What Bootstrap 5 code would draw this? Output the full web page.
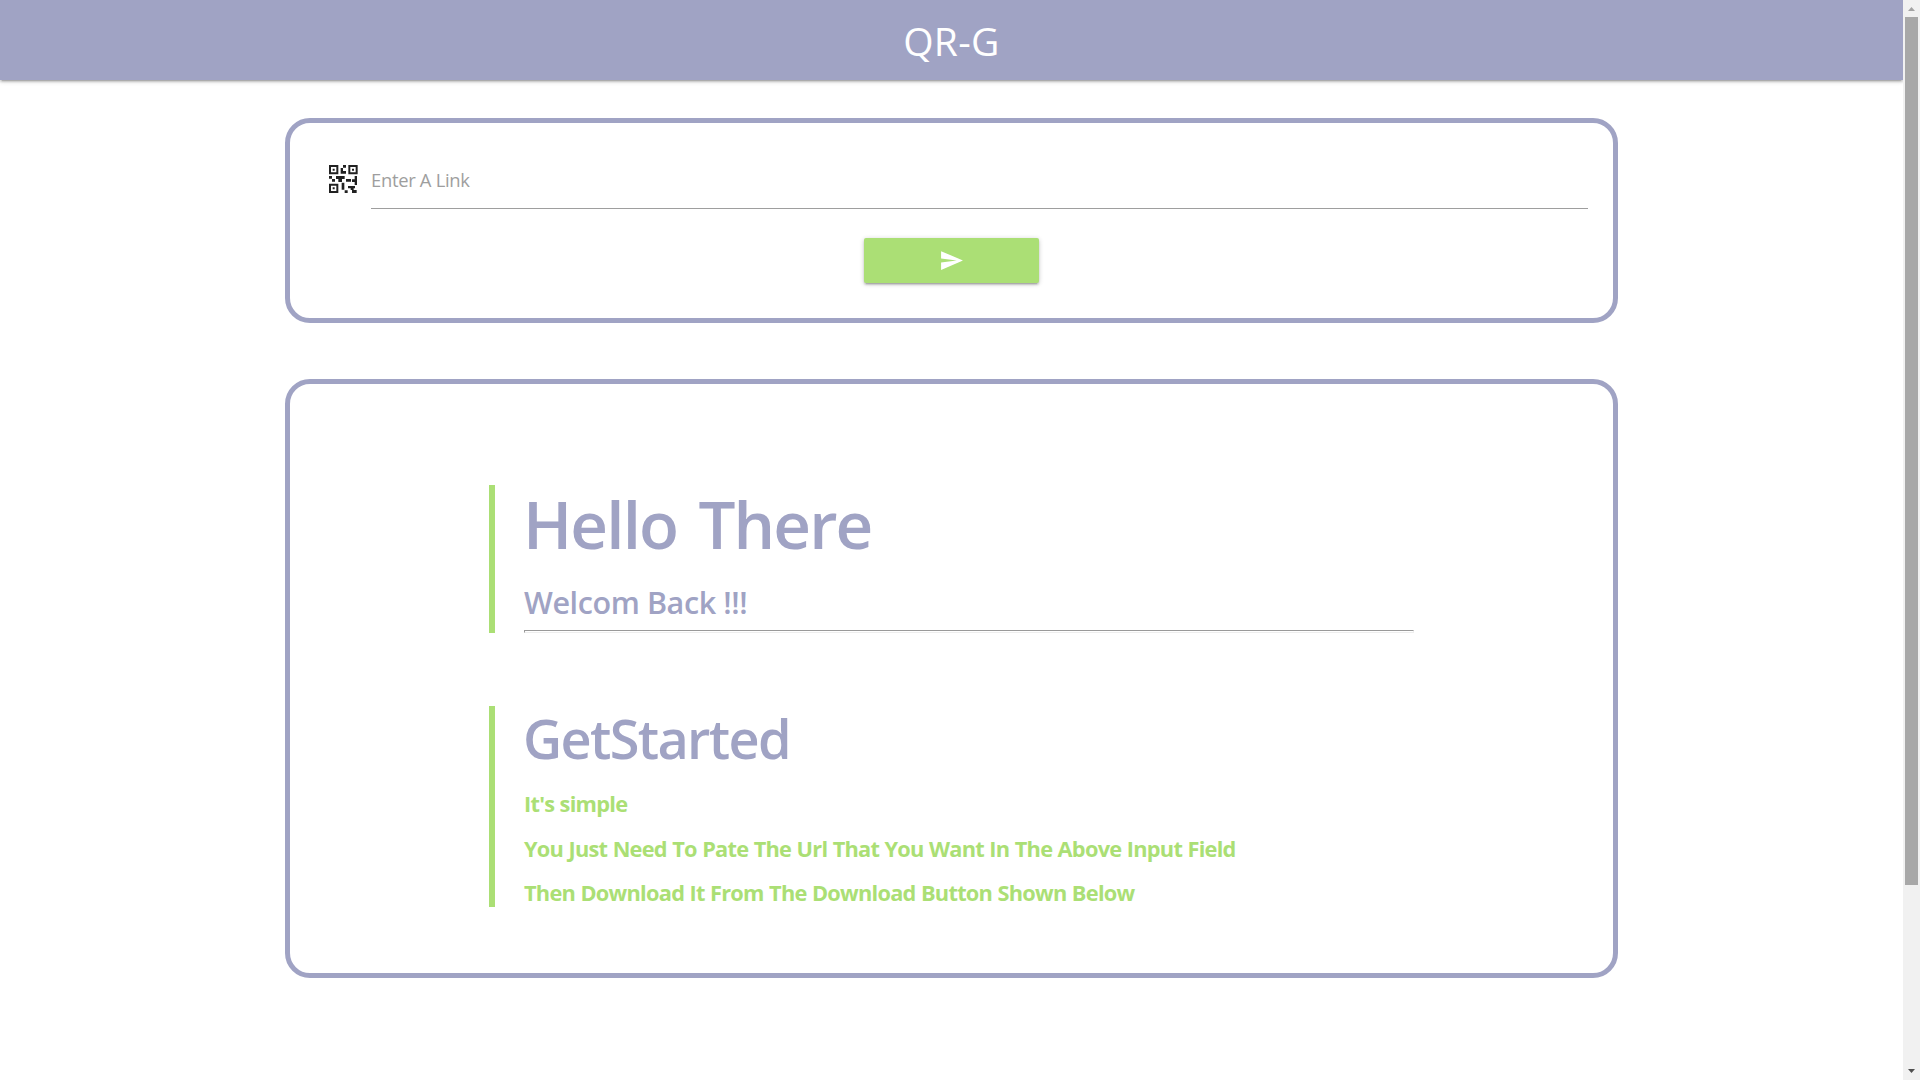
<!DOCTYPE html>
<html lang="en">
<head>
<meta charset="utf-8">
<title>QR-G</title>
<link href="https://cdn.jsdelivr.net/npm/bootstrap@5.3.0/dist/css/bootstrap.min.css" rel="stylesheet">
<style>
:root{--lav:#a0a3c4;--lime:#abdf75}
body{font-family:"Open Sans","Noto Sans",sans-serif;background:#fff;height:1080px;overflow:hidden}
.material-shadow{box-shadow:0 2px 2px 0 rgba(0,0,0,.14),0 3px 1px -2px rgba(0,0,0,.12),0 1px 5px 0 rgba(0,0,0,.2)}
.page-pane{width:1903px;overflow:hidden}
.topbar{height:80px;background:var(--lav)}
.brand-name{font-size:39px;line-height:81px;letter-spacing:.3px}
.panel{width:1333px;border:5px solid var(--lav);border-radius:25px}
.link-panel{height:205px;margin-top:38px;padding:42px 25px 0 39px}
.info-panel{height:599px;margin-top:56px;padding:101px 199px 0}
.link-input{width:1217px;height:44px;border:0;border-bottom:1px solid #9e9e9e;padding:0 0 14px;font-size:18.4px;letter-spacing:-.3px;background:transparent;outline:0}
.link-input::placeholder{color:#9e9e9e;opacity:1}
.send-row{margin-left:-14px}
.send-btn{width:175px;height:45px;background:var(--lime);border-radius:2px;margin-top:29px;padding:0 0 1px;border:0}
.quote-block{border-left:6px solid var(--lime);padding-left:29px}
.quote-block h1,.quote-block h2,.quote-block h3{color:var(--lav);font-weight:600;margin:0;white-space:nowrap}
.quote-block .hello{font-size:65.5px;line-height:78px;letter-spacing:-1.85px;word-spacing:6px;height:77px;margin-left:-1px}
.quote-block .welcome{font-size:30.5px;line-height:41px;height:40px;letter-spacing:-.4px;margin-top:20px}
.intro-steps{margin-top:73px}
.quote-block .started{font-size:54px;line-height:64px;letter-spacing:-1.65px;height:60px;margin-left:-1px}
.step{font-size:21.8px;line-height:31px;height:30px;letter-spacing:-.75px;word-spacing:.4px;font-weight:700;color:var(--lime);margin:14px 0 0;white-space:nowrap}
.started + .step{margin:22px 0 15px}
.inset-rule{width:890px;height:3px;border:1px solid;border-color:#9a9a9a #eee #eee #9a9a9a;margin-top:8px}
.scroll-track{width:17px;height:1080px;background:#f1f1f1}
.scroll-thumb{width:13px;height:868px;background:#a8a8a8}
</style>
</head>
<body>
<div class="d-flex">
<div class="page-pane vh-100">
<nav class="topbar material-shadow text-center text-white"><span class="brand-name">QR-G</span></nav>
<section class="panel link-panel mx-auto">
<div class="d-flex align-items-start">
<svg width="29" height="28" viewBox="0 0 87 84" fill="#212121"><path fill-rule="evenodd" d="M0 0h28v28H0zM6 6v16h16V6zM11 11h6v6h-6zM58 0h28v28H58zM64 6v16h16V6zM69 11h6v6h-6zM0 56h28v28H0zM6 62v16h16V62zM11 67h6v6h-6z"/><path d="M42 0h9v8h-9zM35 9h7v9h9v8H35zM0 33h9v8H0zM9 42h9v8H9zM21 33h26v9h-8v9H28v-9h-7zM51 42h15v8H51zM77 33h7v27h-7v-9h-8v-8h8zM38 53h8v21h-8zM47 76h9v8h-9zM57 63h21v7h-4v5h9v9H69v-9h-4v-5h-8z"/></svg>
<input class="link-input ms-auto" type="text" placeholder="Enter A Link">
</div>
<div class="send-row d-flex justify-content-center"><button class="btn send-btn material-shadow d-flex align-items-center justify-content-center" aria-label="Send"><svg width="25" height="25" viewBox="0 0 24 24" fill="#fff"><path d="M2.01 21 23 12 2.01 3 2 10l15 2-15 2z"/></svg></button></div>
</section>
<section class="panel info-panel mx-auto">
<div class="quote-block">
<h1 class="hello">Hello There</h1>
<h3 class="welcome">Welcom Back !!!</h3>
<div class="inset-rule"></div>
</div>
<div class="quote-block intro-steps">
<h2 class="started">GetStarted</h2>
<p class="step">It's simple</p>
<p class="step">You Just Need To Pate The Url That You Want In The Above Input Field</p>
<p class="step">Then Download It From The Download Button Shown Below</p>
</div>
</section>
</div>
<div class="scroll-track d-flex flex-column align-items-center"><svg width="17" height="17"><path fill="#a3a3a3" d="M5 11h7L8.5 7z"/></svg><div class="scroll-thumb mb-auto"></div><svg width="17" height="17"><path fill="#505050" d="M5 6h7L8.5 10z"/></svg></div>
</div>
<script src="https://cdn.jsdelivr.net/npm/bootstrap@5.3.0/dist/js/bootstrap.bundle.min.js"></script>
</body>
</html>
